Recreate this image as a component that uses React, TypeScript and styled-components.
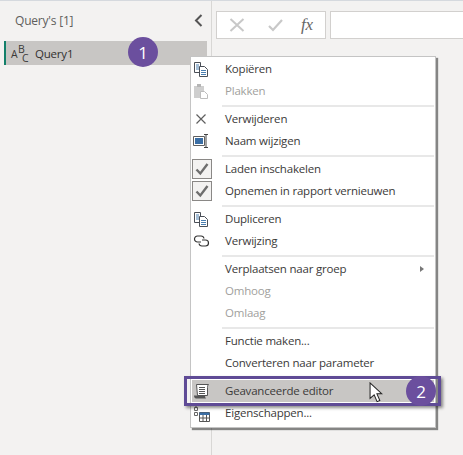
import React from "react";
import styled, { createGlobalStyle } from "styled-components";

const GlobalStyle = createGlobalStyle`
  html, body {
    margin: 0;
    padding: 0;
    background: #f3f2f1;
  }
  body {
    font-family: "Open Sans", "Noto Sans", sans-serif;
    font-size: 11.5px;
    letter-spacing: -0.2px;
    color: #3b3a39;
  }
`;

const CopyIcon = () => (
  <svg width="16" height="16" viewBox="0 0 16 16" fill="none" stroke="#4a4f57" strokeWidth="1">
    <path d="M1.5 1.5h6v10h-6z" fill="#fff" />
    <path d="M3 4h3M3 6h3M3 8h3" stroke="#4a7fb0" />
    <path d="M6.5 5.5h5l3 3v7h-8z" fill="#fff" />
    <path d="M8 9.5h5M8 11.5h5M8 13.5h5" stroke="#4a7fb0" />
  </svg>
);

const PasteIcon = () => (
  <svg width="16" height="16" viewBox="0 0 16 16" fill="none">
    <path d="M1 3h10v12H1z" fill="#cfcfcf" />
    <path d="M4 1h4v3H4z" fill="#b5b5b5" />
    <path d="M7.5 8.5h4l3 3v4h-7z" fill="#fff" stroke="#bdbdbd" />
  </svg>
);

const CrossIcon = () => (
  <svg width="16" height="16" viewBox="0 0 16 16" fill="none" stroke="#5f5f5f" strokeWidth="1.2">
    <path d="M3.5 3.5l9 9M12.5 3.5l-9 9" />
  </svg>
);

const RenameIcon = () => (
  <svg width="18" height="16" viewBox="0 0 18 16" fill="none">
    <path d="M.5 3.5h11v9H.5z" stroke="#5f5f5f" />
    <path d="M2 5h8v6H2z" fill="#3a6ea5" />
    <path d="M11 1.5h4M11 14.5h4M13 2v12" stroke="#444" />
  </svg>
);

const CheckGlyph = () => (
  <svg width="16" height="16" viewBox="0 0 16 16" fill="none" stroke="#6e6e6e" strokeWidth="2.4">
    <path d="M2.5 8.5l3.8 4L13.5 3" />
  </svg>
);

const LinkIcon = () => (
  <svg width="17" height="12" viewBox="0 0 17 12" fill="none" stroke="#333" strokeWidth="1.2">
    <path d="M8 7H4.5a3 3 0 0 1 0-6H8a3 3 0 0 1 3 2.5" />
    <path d="M9 5h3.5a3 3 0 0 1 0 6H9a3 3 0 0 1-3-2.5" />
  </svg>
);

const ScrollIcon = () => (
  <svg width="17" height="17" viewBox="0 0 17 17" fill="none">
    <path d="M3.5 1.5h12c-1 1-1 2-1 3v8h-10z" fill="#fff" stroke="#555" />
    <path d="M6 4.5h6M6 6.5h6M6 8.5h6M6 10.5h6" stroke="#555" />
    <path d="M1 12.5h11c0 2 1 3 1 3H3c-1 0-2-1-2-3z" fill="#555" />
  </svg>
);

const PropsIcon = () => (
  <svg width="17" height="17" viewBox="0 0 17 17" fill="none">
    <path d="M1.5 2.5h3v3h-3zM1.5 7.5h3v3h-3z" stroke="#666" />
    <path d="M3 0v2" stroke="#666" />
    <path d="M6.5 7.5h10v9h-10z" fill="#fff" stroke="#555" />
    <path d="M6.5 7.5h10v2.5h-10z" fill="#3a6ea5" />
    <path d="M6.5 13h10M10 10v6.5M13.5 10v6.5" stroke="#555" />
  </svg>
);

const AbcIcon = () => (
  <AbcText>
    <AbcA>A</AbcA>
    <AbcB>B</AbcB>
    <AbcC>C</AbcC>
  </AbcText>
);

const Pointer = () => (
  <svg width="14" height="21" viewBox="0 0 15 23">
    <path d="M1 1v17l4.5-4 3.2 7.5 3-1.3-3.2-7.2H14z" fill="#fff" stroke="#222" strokeWidth="1.1" />
  </svg>
);

type Item = { label: string; icon?: React.ReactNode; disabled?: boolean; checked?: boolean; arrow?: boolean; active?: boolean };

const groups: Item[][] = [
  [
    { label: "Kopiëren", icon: <CopyIcon /> },
    { label: "Plakken", icon: <PasteIcon />, disabled: true },
  ],
  [
    { label: "Verwijderen", icon: <CrossIcon /> },
    { label: "Naam wijzigen", icon: <RenameIcon /> },
  ],
  [
    { label: "Laden inschakelen", checked: true },
    { label: "Opnemen in rapport vernieuwen", checked: true },
  ],
  [
    { label: "Dupliceren", icon: <CopyIcon /> },
    { label: "Verwijzing", icon: <LinkIcon /> },
  ],
  [
    { label: "Verplaatsen naar groep", arrow: true },
    { label: "Omhoog", disabled: true },
    { label: "Omlaag", disabled: true },
  ],
  [
    { label: "Functie maken..." },
    { label: "Converteren naar parameter" },
  ],
  [
    { label: "Geavanceerde editor", icon: <ScrollIcon />, active: true },
    { label: "Eigenschappen...", icon: <PropsIcon /> },
  ],
];

export default function App() {
  return (
    <>
      <GlobalStyle />
      <Page>
        <Sidebar>
          <SideHeader>
            <SideTitle>Query's [1]</SideTitle>
            <svg width="9" height="13" viewBox="0 0 9 13" fill="none" stroke="#555" strokeWidth="2">
              <path d="M7.5 1L2 6.5 7.5 12" />
            </svg>
          </SideHeader>
          <QueryRow>
            <AbcIcon />
            <span>Query1</span>
            <QueryBadge>1</QueryBadge>
          </QueryRow>
        </Sidebar>
        <Main>
          <FormulaBar>
            <FormulaButtons>
              <svg width="16" height="14" viewBox="0 0 16 14" fill="none" stroke="#c8c8c8" strokeWidth="2">
                <path d="M1.5 1l13 12M14.5 1l-13 12" />
              </svg>
              <svg width="20" height="13" viewBox="0 0 20 13" fill="none" stroke="#c8c8c8" strokeWidth="2.2">
                <path d="M6 7l4 4 9-10" />
              </svg>
              <FxLabel>fx</FxLabel>
            </FormulaButtons>
            <FormulaInput />
          </FormulaBar>
        </Main>
        <Menu>
          {groups.map((group, i) => (
            <React.Fragment key={i}>
              {i > 0 && <Separator />}
              {group.map((item) => (
                <MenuRow key={item.label} $disabled={item.disabled} $active={item.active}>
                  <IconCell>
                    {item.checked ? <CheckBox><CheckGlyph /></CheckBox> : item.icon}
                  </IconCell>
                  <MenuLabel>{item.label}</MenuLabel>
                  {item.arrow && <SubArrow />}
                </MenuRow>
              ))}
            </React.Fragment>
          ))}
        </Menu>
        <Highlight>
          <HighlightBadge>2</HighlightBadge>
        </Highlight>
        <CursorWrap>
          <Pointer />
        </CursorWrap>
      </Page>
    </>
  );
}

const Page = styled.div`
  position: relative;
  width: 463px;
  height: 455px;
  overflow: hidden;
  display: flex;
  border-top: 1px solid #d5d9de;
  box-sizing: border-box;
  background: #f3f2f1;
`;

const Sidebar = styled.div`
  width: 212px;
  flex-shrink: 0;
  border-right: 1px solid #d8d7d5;
  padding: 9px 4px 0 4px;
  box-sizing: border-box;
`;

const SideHeader = styled.div`
  display: flex;
  align-items: center;
  justify-content: space-between;
  padding: 0 4px 0 11px;
  height: 20px;
  margin-bottom: 11px;
`;

const SideTitle = styled.div`
  font-size: 12px;
  color: #605e5c;
`;

const QueryRow = styled.div`
  position: relative;
  height: 24px;
  background: #c8c6c4;
  border-left: 2px solid #13806a;
  display: flex;
  align-items: center;
  gap: 8px;
  padding-left: 5px;
  color: #323130;
`;

const AbcText = styled.div`
  position: relative;
  width: 16px;
  height: 20px;
  font-size: 10.5px;
  line-height: 8px;
  letter-spacing: 0;
  color: #3b3a39;
`;

const AbcA = styled.span`
  position: absolute;
  left: 0;
  top: 7px;
`;

const AbcB = styled.span`
  position: absolute;
  left: 7px;
  top: 2px;
`;

const AbcC = styled.span`
  position: absolute;
  left: 11px;
  top: 11px;
`;

const Badge = styled.div`
  position: absolute;
  width: 30px;
  height: 30px;
  border-radius: 50%;
  background: #6b4f9e;
  color: #fff;
  font-size: 17px;
  letter-spacing: 0;
  display: flex;
  align-items: center;
  justify-content: center;
`;

const QueryBadge = styled(Badge)`
  left: 122px;
  top: -4px;
`;

const Main = styled.div`
  flex: 1;
  padding: 10px 0 0 4px;
`;

const FormulaBar = styled.div`
  display: flex;
  gap: 4px;
  height: 28px;
`;

const FormulaButtons = styled.div`
  width: 110px;
  flex-shrink: 0;
  box-sizing: border-box;
  background: #fff;
  border: 1px solid #d2d0ce;
  display: flex;
  align-items: center;
  gap: 18px;
  padding-left: 12px;
`;

const FxLabel = styled.span`
  font-family: "Liberation Serif", serif;
  font-style: italic;
  font-size: 17px;
  color: #666;
`;

const FormulaInput = styled.div`
  flex: 1;
  background: #fff;
  border: 1px solid #d2d0ce;
  border-right: none;
`;

const Menu = styled.div`
  position: absolute;
  left: 190px;
  top: 55px;
  width: 246px;
  height: 372px;
  box-sizing: border-box;
  background: #fff;
  border: 1px solid #c4c4c4;
  padding: 1px;
  box-shadow: 2px 2px 1px rgba(0, 0, 0, 0.45);
`;

const MenuRow = styled.div<{ $disabled?: boolean; $active?: boolean }>`
  position: relative;
  height: 22px;
  display: flex;
  align-items: center;
  color: ${(p) => (p.$disabled ? "#a19f9d" : "#3b3a39")};
  background: ${(p) => (p.$active ? "#c8c6c4" : "transparent")};
`;

const MenuLabel = styled.span`
  padding-bottom: 2px;
`;

const IconCell = styled.div`
  width: 33px;
  height: 22px;
  flex-shrink: 0;
  display: flex;
  align-items: center;
  padding-left: 1px;
  box-sizing: border-box;
`;

const CheckBox = styled.div`
  width: 20px;
  height: 20px;
  margin-left: -1px;
  box-sizing: border-box;
  border: 1px solid #8a8886;
  background: #f3f2f1;
  display: flex;
  align-items: center;
  justify-content: center;
`;

const Separator = styled.div`
  height: 2px;
  margin: 3px 0 1px 30px;
  background: #e8e8e8;
`;

const SubArrow = styled.div`
  position: absolute;
  right: 10px;
  top: 8px;
  border-left: 4px solid #777;
  border-top: 3px solid transparent;
  border-bottom: 3px solid transparent;
`;

const Highlight = styled.div`
  position: absolute;
  left: 184px;
  top: 375px;
  width: 257px;
  height: 30px;
  box-sizing: border-box;
  border: 3px solid #5f4b96;
  box-shadow: 2px 2px 3px rgba(0, 0, 0, 0.45);
`;

const HighlightBadge = styled(Badge)`
  right: 2px;
  top: -3px;
`;

const CursorWrap = styled.div`
  position: absolute;
  left: 369px;
  top: 381px;
  height: 21px;
`;
